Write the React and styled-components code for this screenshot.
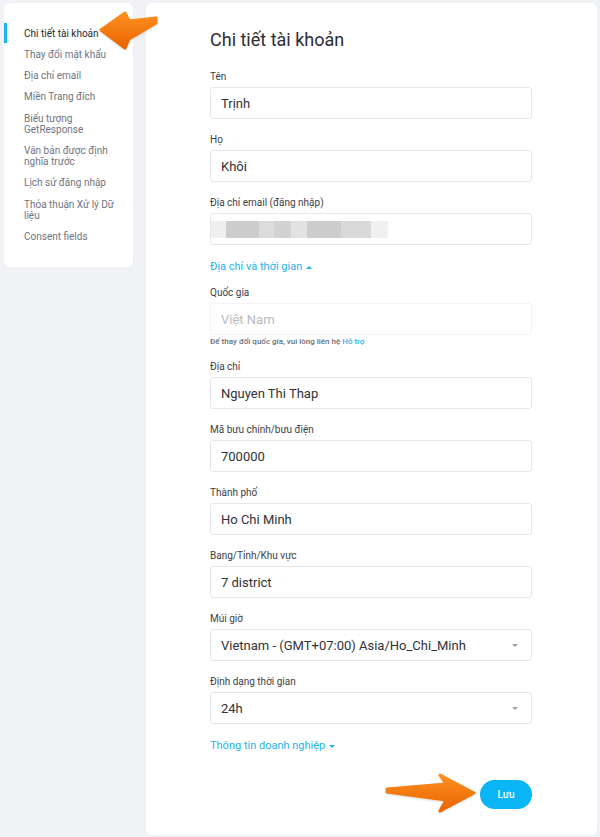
import styled, { createGlobalStyle } from "styled-components";

const GlobalStyle = createGlobalStyle`
  html, body {
    margin: 0;
    padding: 0;
    background: #f1f2f6;
    font-family: Roboto, "Noto Sans", "Liberation Sans", sans-serif;
  }
  * { box-sizing: border-box; }
`;

const menu = [
  "Chi tiết tài khoản",
  "Thay đổi mật khẩu",
  "Địa chỉ email",
  "Miền Trang đích",
  "Biểu tượng GetResponse",
  "Văn bản được định nghĩa trước",
  "Lịch sử đăng nhập",
  "Thỏa thuận Xử lý Dữ liệu",
  "Consent fields",
];

const App = () => {
  return (
    <Page>
      <GlobalStyle />
      <Sidebar>
        {menu.map((item, i) => (
          <MenuItem key={item} $active={i === 0}>
            {item}
          </MenuItem>
        ))}
      </Sidebar>

      <Card>
        <Title>Chi tiết tài khoản</Title>

        <Field>
          <Label>Tên</Label>
          <Input>Trịnh</Input>
        </Field>
        <Field>
          <Label>Họ</Label>
          <Input>Khôi</Input>
        </Field>
        <Field>
          <Label>Địa chỉ email (đăng nhập)</Label>
          <Input>
            <Blurred />
          </Input>
        </Field>

        <Toggle $up>Địa chỉ và thời gian</Toggle>

        <Field $tight>
          <Label>Quốc gia</Label>
          <Input $disabled>Việt Nam</Input>
          <Helper>
            Để thay đổi quốc gia, vui lòng liên hệ <a>Hỗ trợ</a>
          </Helper>
        </Field>
        <Field>
          <Label>Địa chỉ</Label>
          <Input>Nguyen Thi Thap</Input>
        </Field>
        <Field>
          <Label>Mã bưu chính/bưu điện</Label>
          <Input>700000</Input>
        </Field>
        <Field>
          <Label>Thành phố</Label>
          <Input>Ho Chi Minh</Input>
        </Field>
        <Field>
          <Label>Bang/Tỉnh/Khu vực</Label>
          <Input>7 district</Input>
        </Field>
        <Field>
          <Label>Múi giờ</Label>
          <Input $select>Vietnam - (GMT+07:00) Asia/Ho_Chi_Minh</Input>
        </Field>
        <Field>
          <Label>Định dạng thời gian</Label>
          <Input $select>24h</Input>
        </Field>

        <Toggle>Thông tin doanh nghiệp</Toggle>

        <Actions>
          <SaveButton>Lưu</SaveButton>
        </Actions>
      </Card>

      <Arrow $left={98} $top={9} width="60" height="44" viewBox="0 0 60 44">
        <defs>
          <linearGradient id="ag1" x1="0" y1="0" x2="0" y2="1">
            <stop offset="0" stopColor="#ff8f1f" />
            <stop offset="1" stopColor="#e86500" />
          </linearGradient>
        </defs>
        <path
          d="M3,21 L27,4 L31,12 L58,9 L58,14 L31,30 L27,39 Z"
          fill="url(#ag1)"
          stroke="url(#ag1)"
          strokeWidth="3"
          strokeLinejoin="round"
        />
      </Arrow>

      <Arrow $left={384} $top={770} width="96" height="46" viewBox="0 0 96 46">
        <defs>
          <linearGradient id="ag2" x1="0" y1="0" x2="0" y2="1">
            <stop offset="0" stopColor="#ff8f1f" />
            <stop offset="1" stopColor="#e86500" />
          </linearGradient>
        </defs>
        <path
          d="M3,19 L62,14 L56,5 L90,23 L56,41 L62,30 L3,22 Z"
          fill="url(#ag2)"
          stroke="url(#ag2)"
          strokeWidth="3"
          strokeLinejoin="round"
        />
      </Arrow>
    </Page>
  );
};
export default App;

/****************** styled component ***************/

const Page = styled.div`
  position: relative;
  display: flex;
  align-items: flex-start;
  gap: 13px;
  padding: 3px 3px 2px 4px;
  min-height: 837px;
`;

const Sidebar = styled.nav`
  width: 129px;
  flex-shrink: 0;
  background: #fff;
  border-radius: 6px;
  padding: 20px 11px 21px 0;
  display: flex;
  flex-direction: column;
  gap: 1.3px;
`;

const MenuItem = styled.div`
  position: relative;
  padding: 4.5px 0 4.5px 20px;
  font-size: 10px;
  line-height: 11px;
  color: ${(p) => (p.$active ? "#26292f" : "#707480")};

  &::before {
    content: "";
    display: ${(p) => (p.$active ? "block" : "none")};
    position: absolute;
    left: 0;
    top: 0;
    bottom: 0;
    width: 3px;
    background: #1ab4f0;
  }
`;

const Card = styled.main`
  width: 451px;
  background: #fff;
  border-radius: 6px;
  padding: 26px 65px 26px 64px;
  display: flex;
  flex-direction: column;
`;

const Title = styled.h1`
  margin: 0 0 20px;
  font-size: 18px;
  line-height: 22px;
  font-weight: 400;
  color: #2b2d33;
`;

const Field = styled.div`
  display: flex;
  flex-direction: column;
  margin-bottom: ${(p) => (p.$tight ? 14 : 15)}px;
`;

const Label = styled.label`
  font-size: 10px;
  line-height: 12px;
  color: #3d4047;
  margin-bottom: 4px;
`;

const Input = styled.div`
  position: relative;
  height: 32px;
  display: flex;
  align-items: center;
  padding: 0 10px;
  border: 1px solid ${(p) => (p.$disabled ? "#f3f3f6" : "#e6e7ec")};
  border-radius: 3px;
  font-size: 13px;
  color: ${(p) => (p.$disabled ? "#b8bac0" : "#303238")};

  &::after {
    content: "";
    display: ${(p) => (p.$select ? "block" : "none")};
    position: absolute;
    right: 13px;
    top: 14px;
    border-left: 3px solid transparent;
    border-right: 3px solid transparent;
    border-top: 3px solid #9a9ca3;
  }
`;

const Blurred = styled.span`
  display: block;
  margin-left: -10px;
  width: 177px;
  height: 17px;
  background: linear-gradient(
    to right,
    #efefef 0 15px,
    #cdcdcd 15px 48px,
    #dcdcdc 48px 63px,
    #d2d2d2 63px 80px,
    #e2e2e2 80px 96px,
    #cdcdcd 96px 130px,
    #d9d9d9 130px 160px,
    #f0f0f0 160px 177px
  );
`;

const Toggle = styled.div`
  display: flex;
  align-items: center;
  gap: 4px;
  font-size: 11px;
  line-height: 14px;
  color: #26b3ec;
  margin: 0 0 ${(p) => (p.$up ? 13 : 0)}px;

  &::after {
    content: "";
    border-left: 3px solid transparent;
    border-right: 3px solid transparent;
    ${(p) =>
      p.$up
        ? "border-bottom: 3px solid #26b3ec;"
        : "border-top: 3px solid #26b3ec;"}
  }
`;

const Helper = styled.p`
  margin: 2px 0 0;
  font-size: 8px;
  line-height: 10px;
  font-weight: 500;
  color: #6a6d75;

  a {
    color: #26b3ec;
  }
`;

const Actions = styled.div`
  display: flex;
  justify-content: flex-end;
  margin-top: 27px;
`;

const SaveButton = styled.button`
  width: 52px;
  height: 29px;
  border: none;
  border-radius: 15px;
  background: #0ab5f6;
  color: #fff;
  font-family: inherit;
  font-size: 10px;
  font-weight: 500;
`;

const Arrow = styled.svg`
  position: absolute;
  left: ${(p) => p.$left}px;
  top: ${(p) => p.$top}px;
  filter: drop-shadow(0 1px 1px rgba(0, 0, 0, 0.15));
`;
